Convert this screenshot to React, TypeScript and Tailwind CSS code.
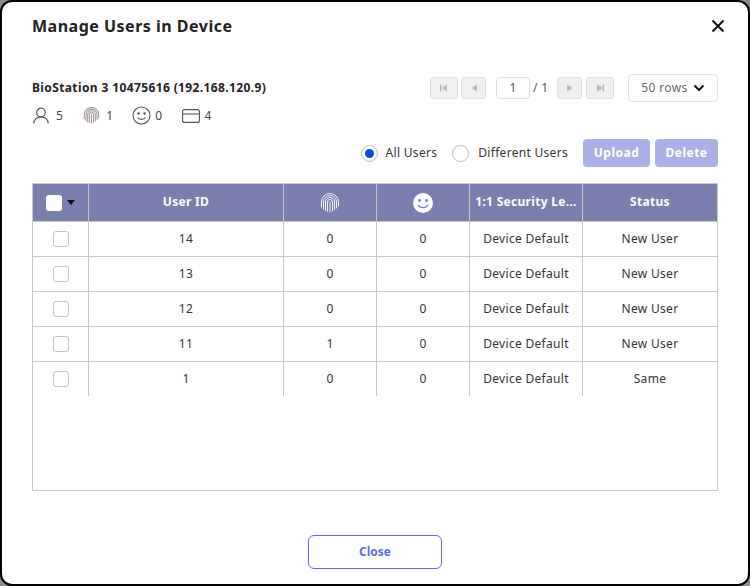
import React from "react";

const font = "font-['Noto_Sans','Open_Sans',sans-serif]";
const rows = [
  ["14", "0", "0", "Device Default", "New User"],
  ["13", "0", "0", "Device Default", "New User"],
  ["12", "0", "0", "Device Default", "New User"],
  ["11", "1", "0", "Device Default", "New User"],
  ["1", "0", "0", "Device Default", "Same"],
];
const grid = "grid grid-cols-[56px_195px_93px_93px_113px_1fr]";

function Finger({ size, color, sw = 1 }: { size: number; color: string; sw?: number }) {
  return (
    <svg width={size} height={size} viewBox="0 0 20 20" fill="none" stroke={color} strokeWidth={sw} strokeLinecap="round">
      <path d="M1.500 14V9a8.500 8.500 0 0 1 17 0v4" />
      <path d="M3.500 16V9a6.500 6.500 0 0 1 13 0v6" />
      <path d="M5.500 17.500V9a4.500 4.500 0 0 1 9 0v7.500" />
      <path d="M7.500 18.500V9a2.500 2.500 0 0 1 5 0v9" />
      <path d="M10 19V9" />
    </svg>
  );
}

function PageBtn({ dir, last }: { dir: "l" | "r"; last?: boolean }) {
  return (
    <div className={`h-[22px] ${last ? "w-7" : "w-[25px]"} flex items-center justify-center rounded-[3px] border border-[#e2e2e2] bg-[#f0f0f0]`}>
      <svg width="10" height="10" viewBox="0 0 10 10" fill="#b9b9b9">
        {dir === "l" ? <path d="M8 1.500v7L2.500 5z" /> : <path d="M2 1.500v7L7.500 5z" />}
        {last && (dir === "l" ? <rect x="1" y="1.500" width="1.500" height="7" /> : <rect x="7.500" y="1.500" width="1.500" height="7" />)}
      </svg>
    </div>
  );
}

export default function App() {
  return (
    <div className={`${font} h-[586px] w-[750px] bg-[#8c8c8c] tracking-[0.3px]`}>
      <div className="flex h-full w-full flex-col rounded-[12px] border-2 border-black bg-white px-[30px] text-[#333]">
        <div className="flex h-[46px] items-center justify-between pt-[1px]">
          <h1 className="text-[16px] leading-none font-bold tracking-[0.5px] text-[#222]">Manage Users in Device</h1>
          <svg width="14" height="14" viewBox="0 0 14 14" className="mr-[-7px]" stroke="#111" strokeWidth="2" fill="none">
            <path d="M1.500 1.500l11 11M12.500 1.500l-11 11" />
          </svg>
        </div>

        <div className="mt-[26px] flex items-start justify-between">
          <div className="pt-[6px]">
            <div className="text-[12px] leading-[16px] font-bold tracking-[0.38px] text-[#222]">BioStation 3 10475616 (192.168.120.9)</div>
            <div className="mt-[10px] flex h-[19px] items-center text-[12px] leading-[16px] text-[#444]">
              <svg width="16" height="17" viewBox="0 0 16 17" fill="none" stroke="#5b5353" strokeWidth="1.200" className="ml-[1px]">
                <circle cx="8" cy="5.500" r="4.300" />
                <path d="M0.800 16.500c0-4 3-6.700 7.200-6.700s7.200 2.700 7.200 6.700" />
              </svg>
              <span className="ml-[7px]">5</span>
              <span className="ml-[20px]"><Finger size={17} color="#a09595" sw={1.200} /></span>
              <span className="ml-[6px]">1</span>
              <svg className="ml-[19px]" width="19" height="19" viewBox="0 0 19 19" fill="none" stroke="#5b5353" strokeWidth="1.100">
                <circle cx="9.500" cy="9.500" r="8.500" />
                <circle cx="6.500" cy="7.500" r="0.700" fill="#5b5353" />
                <circle cx="12.500" cy="7.500" r="0.700" fill="#5b5353" />
                <path d="M5.500 11.500c1.500 2.500 6.500 2.500 8 0" />
              </svg>
              <span className="ml-[4px]">0</span>
              <svg className="ml-[19px]" width="18" height="14" viewBox="0 0 18 14" fill="none" stroke="#5b5353" strokeWidth="1.100">
                <rect x="0.600" y="0.600" width="16.800" height="12.800" rx="2" />
                <path d="M0.600 5h16.800" />
              </svg>
              <span className="ml-[5px]">4</span>
            </div>
          </div>

          <div className="flex items-center">
            <div className="flex items-center gap-[3px]">
              <PageBtn dir="l" last />
              <PageBtn dir="l" />
            </div>
            <div className="ml-[10px] flex h-[22px] w-[34px] items-center justify-center rounded-[4px] border border-[#dedede] text-[12px] text-[#555]">1</div>
            <span className="ml-[3px] w-[14px] text-[12px] whitespace-nowrap text-[#555]">/ 1</span>
            <div className="ml-[10px] flex items-center gap-[4px]">
              <PageBtn dir="r" />
              <PageBtn dir="r" last />
            </div>
            <div className="ml-[14px] flex h-[28px] w-[90px] items-center justify-center gap-[5px] rounded-[4px] border border-[#e2e2e2] text-[12px] tracking-[0.4px] text-[#666]">
              50 rows
              <svg width="12" height="8" viewBox="0 0 12 8" fill="none" stroke="#111" strokeWidth="2">
                <path d="M1.500 1.500L6 6l4.500-4.500" />
              </svg>
            </div>
          </div>
        </div>

        <div className="mt-[14px] flex h-[28px] items-center justify-end text-[12px] text-[#333]">
          <span className="flex h-[17px] w-[17px] items-center justify-center rounded-full border border-[#bdbdbd]">
            <span className="h-[9px] w-[9px] rounded-full bg-[#0b4fd8]" />
          </span>
          <span className="ml-[8px]">All Users</span>
          <span className="ml-[15px] h-[17px] w-[17px] rounded-full border border-[#bdbdbd]" />
          <span className="ml-[9px]">Different Users</span>
          <div className="ml-[15px] flex h-[28px] w-[67px] items-center justify-center rounded-[4px] bg-[#abb0e6] font-bold tracking-[0.5px] text-white">Upload</div>
          <div className="ml-[5px] flex h-[28px] w-[63px] items-center justify-center rounded-[4px] bg-[#abb0e6] font-bold tracking-[0.5px] text-white">Delete</div>
        </div>

        <div className="mt-[16px] h-[308px] border border-[#c8c8c8]">
          <div className={`${grid} h-[38px] border-b border-[#c8c8c8] bg-[#7a7fae] text-[12px] font-bold text-white`}>
            <div className="flex items-center justify-center gap-[5px] border-r border-[#c4c4c4]">
              <span className="h-[16px] w-[16px] rounded-[3px] bg-white" />
              <svg width="8" height="5" viewBox="0 0 8 5" fill="#111"><path d="M0 0h8L4 5z" /></svg>
            </div>
            <div className="flex items-center justify-center border-r border-[#c4c4c4] pb-[2px]">User ID</div>
            <div className="flex items-center justify-center border-r border-[#c4c4c4]"><Finger size={20} color="#fff" sw={0.9} /></div>
            <div className="flex items-center justify-center border-r border-[#c4c4c4]">
              <svg width="20" height="20" viewBox="0 0 20 20">
                <circle cx="10" cy="10" r="10" fill="#fff" />
                <circle cx="6.500" cy="7.500" r="1.400" fill="#7a7fae" />
                <circle cx="13.500" cy="7.500" r="1.400" fill="#7a7fae" />
                <path d="M5 12c2 3.500 8 3.500 10 0" fill="none" stroke="#7a7fae" strokeWidth="1.300" />
              </svg>
            </div>
            <div className="flex items-center justify-center border-r border-[#c4c4c4] pb-[2px] whitespace-nowrap">1:1 Security Le...</div>
            <div className="flex items-center justify-center pb-[2px]">Status</div>
          </div>
          {rows.map((r, i) => (
            <div key={r[0]} className={`${grid} h-[35px] border-b text-[12px] text-[#333] ${i < rows.length - 1 ? "border-[#c8c8c8]" : "border-transparent"}`}>
              <div className="flex items-center justify-center border-r border-[#c8c8c8]">
                <span className="h-[16px] w-[16px] rounded-[3px] border border-[#c4c4c4]" />
              </div>
              {r.map((c, j) => (
                <div key={j} className={`flex items-center justify-center ${j < 4 ? "border-r border-[#c8c8c8]" : ""}`}>{c}</div>
              ))}
            </div>
          ))}
        </div>

        <div className="mt-[44px] flex justify-center">
          <div className="flex h-[34px] w-[134px] items-center justify-center rounded-[6px] border border-[#5b6ddb] text-[12px] font-bold tracking-normal text-[#5b6ddb]">Close</div>
        </div>
      </div>
    </div>
  );
}
